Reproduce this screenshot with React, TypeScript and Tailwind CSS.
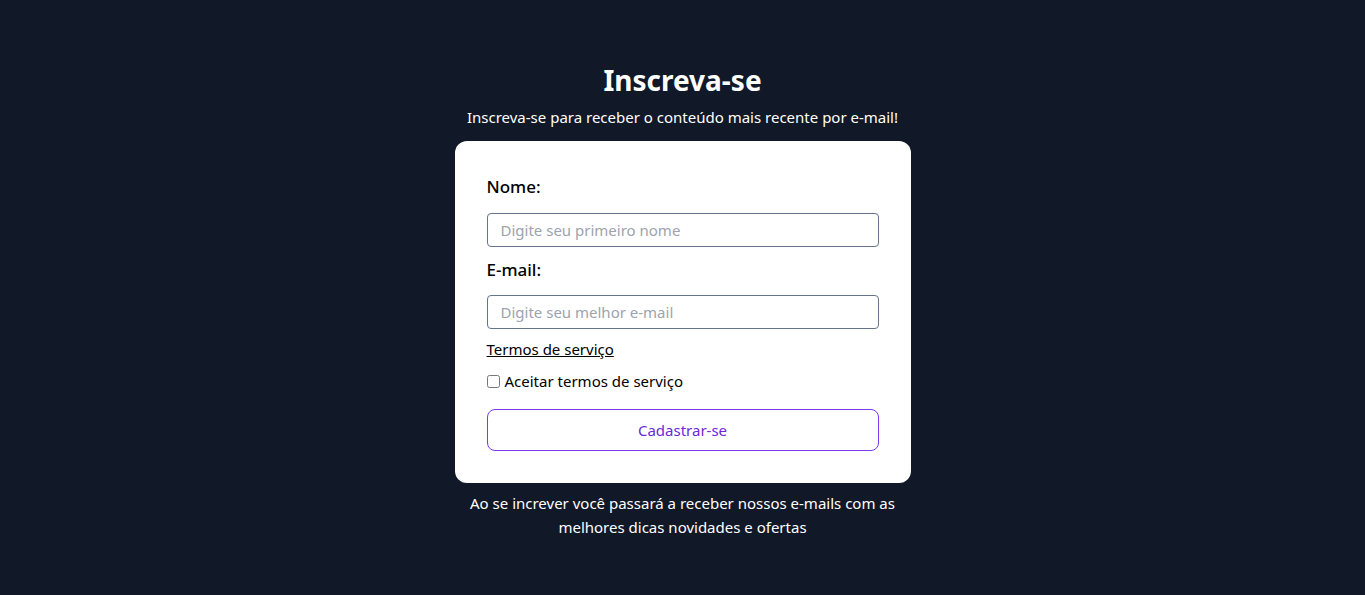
export default function App() {
  return (
    <div
      className="min-h-screen w-full bg-[#111827] flex flex-col items-center pt-[62px] text-white"
      style={{ fontFamily: '"Noto Sans", "Open Sans", sans-serif' }}
    >
      <h1 className="text-[28px] leading-[36px] font-bold">Inscreva-se</h1>
      <p className="mt-[7px] text-[15px] leading-[24px]">
        Inscreva-se para receber o conteúdo mais recente por e-mail!
      </p>
      <div className="mt-[12px] w-[456px] bg-white rounded-xl px-8 pt-8 pb-8 text-black">
        <label className="block text-[17px] leading-[28px] font-medium">Nome:</label>
        <input
          type="text"
          placeholder="Digite seu primeiro nome"
          className="mt-[12px] block w-full h-[34px] border border-[#64748b] rounded-[4px] px-[13px] text-[15px] placeholder:text-[#9ca3af] outline-none"
        />
        <label className="mt-[9px] block text-[17px] leading-[28px] font-medium">E-mail:</label>
        <input
          type="email"
          placeholder="Digite seu melhor e-mail"
          className="mt-[11px] block w-full h-[34px] border border-[#64748b] rounded-[4px] px-[13px] text-[15px] placeholder:text-[#9ca3af] outline-none"
        />
        <a href="#" className="mt-[8px] block w-fit text-[15px] leading-[24px] underline">
          Termos de serviço
        </a>
        <div className="mt-[8px] flex items-center gap-[5px] text-[15px] leading-[24px]">
          <input type="checkbox" className="w-[13px] h-[13px] m-0" />
          <span>Aceitar termos de serviço</span>
        </div>
        <button className="mt-[16px] w-full h-[42px] border border-[#7c3aed] rounded-lg text-[#6d28d9] text-[15px]">
          Cadastrar-se
        </button>
      </div>
      <p className="mt-[8px] w-[456px] text-center text-[15px] leading-[24px]">
        Ao se increver você passará a receber nossos e-mails com as melhores dicas novidades e ofertas
      </p>
    </div>
  );
}
